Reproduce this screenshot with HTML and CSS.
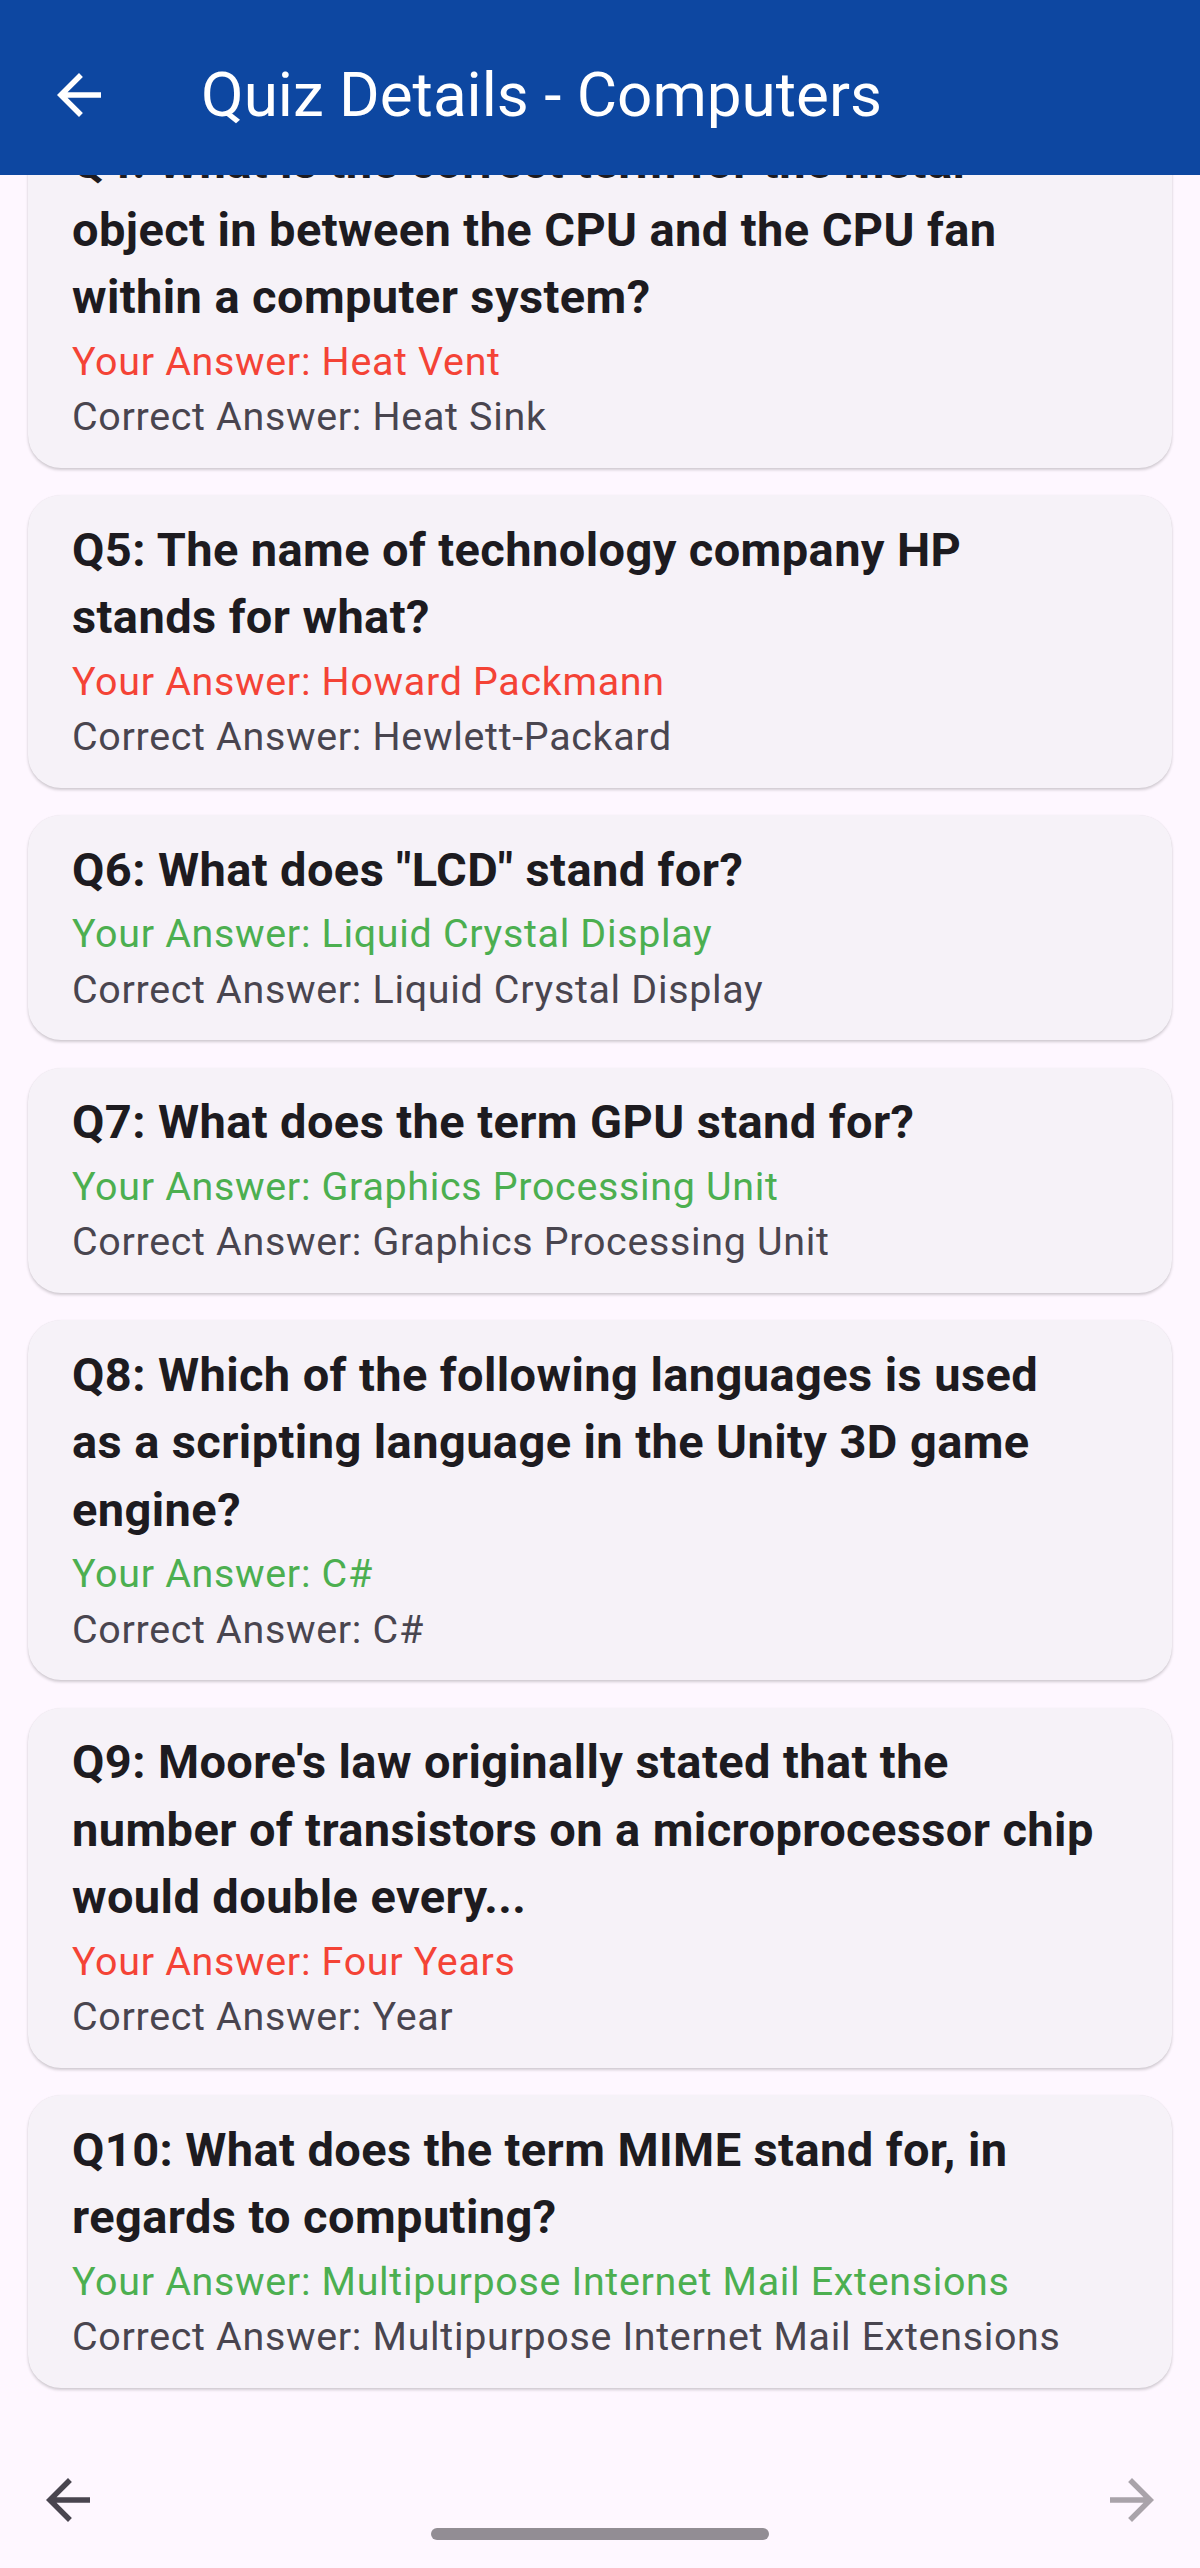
FILE: index.html
```html
<!DOCTYPE html>
<html lang="en">
<head>
<meta charset="utf-8">
<title>Quiz Details - Computers</title>
<link rel="stylesheet" href="styles.css">
</head>
<body>
<div class="screen">
  <header class="appbar">
    <button class="icon-btn back" aria-label="Back">
      <svg viewBox="0 0 24 24" width="66" height="66"><path fill="currentColor" d="M20 11H7.830l5.590-5.590L12 4l-8 8 8 8 1.410-1.410L7.830 13H20v-2z"/></svg>
    </button>
    <h1 class="title">Quiz Details - Computers</h1>
  </header>

  <main class="content">
    <div class="list">
      <article class="card">
        <p class="question">Q4: What is the correct term for the metal object in between the CPU and the CPU fan within a computer system?</p>
        <div class="answers">
          <p class="answer wrong">Your Answer: Heat Vent</p>
          <p class="answer correct">Correct Answer: Heat Sink</p>
        </div>
      </article>
      <article class="card">
        <p class="question">Q5: The name of technology company HP stands for what?</p>
        <div class="answers">
          <p class="answer wrong">Your Answer: Howard Packmann</p>
          <p class="answer correct">Correct Answer: Hewlett-Packard</p>
        </div>
      </article>
      <article class="card">
        <p class="question">Q6: What does "LCD" stand for?</p>
        <div class="answers">
          <p class="answer right">Your Answer: Liquid Crystal Display</p>
          <p class="answer correct">Correct Answer: Liquid Crystal Display</p>
        </div>
      </article>
      <article class="card">
        <p class="question">Q7: What does the term GPU stand for?</p>
        <div class="answers">
          <p class="answer right">Your Answer: Graphics Processing Unit</p>
          <p class="answer correct">Correct Answer: Graphics Processing Unit</p>
        </div>
      </article>
      <article class="card">
        <p class="question">Q8: Which of the following languages is used as a scripting language in the Unity 3D game engine?</p>
        <div class="answers">
          <p class="answer right">Your Answer: C#</p>
          <p class="answer correct">Correct Answer: C#</p>
        </div>
      </article>
      <article class="card">
        <p class="question">Q9: Moore's law originally stated that the number of transistors on a microprocessor chip would double every...</p>
        <div class="answers">
          <p class="answer wrong">Your Answer: Four Years</p>
          <p class="answer correct">Correct Answer: Year</p>
        </div>
      </article>
      <article class="card">
        <p class="question">Q10: What does the term MIME stand for, in regards to computing?</p>
        <div class="answers">
          <p class="answer right">Your Answer: Multipurpose Internet Mail Extensions</p>
          <p class="answer correct">Correct Answer: Multipurpose Internet Mail Extensions</p>
        </div>
      </article>
    </div>
  </main>

  <nav class="bottomnav">
    <button class="icon-btn prev" aria-label="Previous">
      <svg viewBox="0 0 24 24" width="66" height="66"><path fill="currentColor" d="M20 11H7.830l5.590-5.590L12 4l-8 8 8 8 1.410-1.410L7.830 13H20v-2z"/></svg>
    </button>
    <button class="icon-btn next" aria-label="Next" disabled>
      <svg viewBox="0 0 24 24" width="66" height="66"><path fill="currentColor" d="M12 4l-1.410 1.410L16.170 11H4v2h12.170l-5.580 5.590L12 20l8-8z"/></svg>
    </button>
    <div class="home-indicator"></div>
  </nav>
</div>
</body>
</html>
```

FILE: styles.css
```css
* { box-sizing: border-box; }

html, body {
  margin: 0;
  padding: 0;
}

body {
  width: 1200px;
  height: 2568px;
  overflow: hidden;
  background: #FEF7FF;
  font-family: Roboto, "Noto Sans", "Liberation Sans", sans-serif;
}

.screen {
  display: flex;
  flex-direction: column;
  height: 2568px;
}

.appbar {
  flex: none;
  height: 175px;
  padding-top: 15px;
  background: #0D47A1;
  display: flex;
  align-items: center;
  color: #FFFFFF;
  position: relative;
  z-index: 2;
}

.icon-btn {
  border: 0;
  background: transparent;
  padding: 0;
  margin: 0;
  width: 66px;
  height: 66px;
  display: block;
  color: inherit;
}

.icon-btn svg { display: block; }

.appbar .back {
  margin-left: 46px;
  color: #FFFFFF;
}

.title {
  margin: 0 0 0 89px;
  font-size: 62px;
  line-height: 62px;
  font-weight: 400;
  letter-spacing: 0;
  color: #FFFFFF;
}

.content {
  flex: 1;
  overflow: hidden;
  position: relative;
  z-index: 1;
}

.list {
  margin-top: -67.5px;
  padding: 0 28px;
  display: flex;
  flex-direction: column;
  gap: 27.5px;
}

.card {
  background: #F6F2F8;
  border-radius: 33px;
  padding: 20.5px 76px 23px 44px;
  box-shadow: 0 2px 3px rgba(0, 0, 0, 0.18), 0 0 1px rgba(0, 0, 0, 0.08);
}

.card p { margin: 0; }

.question {
  font-size: 47px;
  line-height: 67.5px;
  font-weight: 700;
  letter-spacing: 0.4px;
  color: #1D1B20;
}

.answers {
  margin-top: 3px;
}

.answer {
  font-size: 39.4px;
  line-height: 55.5px;
  font-weight: 400;
  letter-spacing: 0.69px;
  white-space: nowrap;
}

.answer.wrong { color: #F44336; }
.answer.right { color: #4CAF50; }
.answer.correct { color: #49454F; }

.bottomnav {
  flex: none;
  height: 168px;
  padding: 67px 35px 0 35px;
  display: flex;
  justify-content: space-between;
  align-items: flex-start;
  position: relative;
}

.bottomnav .prev { color: #49454F; }
.bottomnav .next { color: #A9A3AA; }

.home-indicator {
  position: absolute;
  left: 431px;
  top: 128px;
  width: 338px;
  height: 12px;
  border-radius: 6px;
  background: #928D94;
}
```
